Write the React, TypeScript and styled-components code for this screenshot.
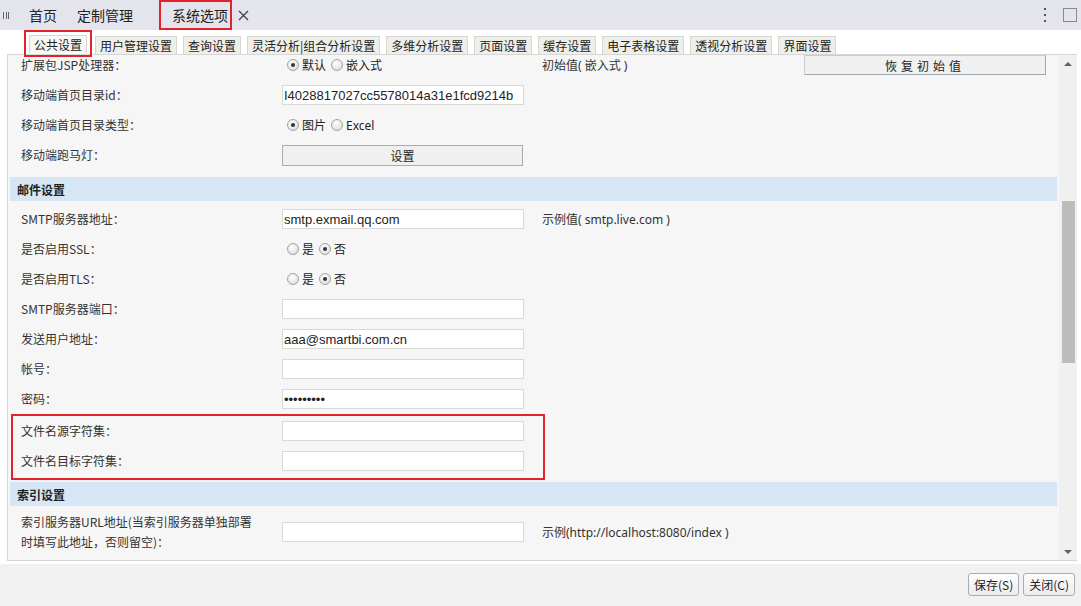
import React from 'react';
import styled, { createGlobalStyle } from 'styled-components';

const GlobalStyle = createGlobalStyle`
  html, body {
    margin: 0;
    padding: 0;
    background: #ffffff;
  }
  body {
    font-family: "Noto Sans CJK SC", "Noto Sans", sans-serif;
    color: #333;
  }
  * {
    box-sizing: border-box;
  }
`;

const Page = styled.div`
  width: 1081px;
  height: 606px;
  display: flex;
  flex-direction: column;
  overflow: hidden;
`;

// top navigation bar
const TopBar = styled.div`
  height: 30px;
  display: flex;
  align-items: stretch;
  background: #e4e4ec;
  padding: 0 4px 0 3px;
`;

const Grip = styled.div`
  width: 6px;
  margin-right: 10px;
  display: flex;
  align-items: center;
  justify-content: space-between;
  & > i {
    width: 1px;
    height: 7px;
    background: #666;
  }
`;

const NavTab = styled.div`
  display: flex;
  align-items: center;
  padding: 0 10px;
  font-size: 14px;
  color: #222;
`;

const ActiveTab = styled.div`
  display: flex;
  align-items: center;
  margin-left: 16px;
  font-size: 14px;
  color: #222;
`;

const Marked = styled.div`
  height: 30px;
  display: flex;
  align-items: center;
  padding: 0 2px 0 11px;
  border: 2px solid #e3232c;
`;

const CloseX = styled.span`
  margin-left: 6px;
  display: flex;
  align-items: center;
`;

const Spacer = styled.div`
  flex: 1;
`;

const Kebab = styled.div`
  width: 4px;
  display: flex;
  flex-direction: column;
  justify-content: center;
  gap: 4px;
  margin-right: 15px;
  & > i {
    width: 2px;
    height: 2px;
    background: #555;
  }
`;

const WinSquare = styled.div`
  align-self: center;
  width: 14px;
  height: 14px;
  border: 1px solid #8a8a8a;
`;

// content area
const Body = styled.div`
  flex: 1;
  display: flex;
  flex-direction: column;
  background: #fff;
  padding: 0 4px 3px 7px;
`;

const SubTabs = styled.div`
  height: 24px;
  display: flex;
  align-items: flex-end;
  gap: 6px;
  padding-left: 22px;
  position: relative;
  z-index: 1;
`;

const SubTab = styled.div<{ $active?: boolean }>`
  height: 18px;
  padding: 0 4px;
  display: flex;
  align-items: center;
  font-size: 12px;
  color: #222;
  background: ${(p) => (p.$active ? '#f7f7f4' : '#efefea')};
  border: 1px solid #d6d6d2;
  border-bottom: none;
`;

const SubTabMark = styled.div`
  height: 27px;
  margin: 0 -3px -3px -5px;
  padding: 0 3px 2px 3px;
  display: flex;
  align-items: flex-end;
  border: 2px solid #e3232c;
`;

const Panel = styled.div`
  height: 507px;
  display: flex;
  border: 1px solid #d6d6d6;
  border-right: none;
`;

const FormArea = styled.div`
  flex: 1;
  overflow: hidden;
  background: #f6f6f6;
`;

const FormInner = styled.div`
  margin-top: -5px;
`;

const Row = styled.div<{ $inset?: number; $h?: number }>`
  display: grid;
  grid-template-columns: 261px 242px 18px 262px 242px;
  align-items: center;
  height: ${(p) => p.$h ?? 30}px;
  padding-left: ${(p) => p.$inset ?? 13}px;
  font-size: 12px;
`;

const Label = styled.div`
  color: #333;
  line-height: 20px;
`;

const Field = styled.input`
  height: 20px;
  width: 242px;
  border: 1px solid #d9d9d6;
  background: #fff;
  padding: 0 1px;
  font-family: "Liberation Sans", "Noto Sans CJK SC", sans-serif;
  font-size: 13px;
  color: #222;
  outline: none;
`;

const Note = styled.div`
  font-size: 12px;
  color: #333;
  font-family: "Noto Sans", "Noto Sans CJK SC", sans-serif;
`;

const FlatButton = styled.div`
  height: 21px;
  width: 241px;
  display: flex;
  align-items: center;
  justify-content: center;
  background: #f0f0f0;
  border: 1px solid #a9adb2;
  font-size: 12px;
  color: #222;
`;

const ResetButton = styled(FlatButton)`
  height: 20px;
  width: 242px;
  letter-spacing: 4px;
  border-color: #c9cdd1 #9fa9b4 #9fa9b4 #c9cdd1;
`;

const RadioGroup = styled.div`
  display: flex;
  align-items: center;
  padding-left: 5px;
  font-size: 12px;
  color: #222;
`;

const RadioItem = styled.label`
  display: flex;
  align-items: center;
  gap: 3px;
  margin-right: 5px;
  font-family: "Noto Sans", "Noto Sans CJK SC", sans-serif;
`;

const RadioDot = styled.span<{ $on?: boolean }>`
  width: 12px;
  height: 12px;
  border-radius: 50%;
  border: 1px solid #a3a3a3;
  background: radial-gradient(circle at 40% 35%, #ffffff 0%, #e6e6e6 60%, #d2d2d2 100%);
  display: flex;
  align-items: center;
  justify-content: center;
  &::after {
    content: '';
    width: 4px;
    height: 4px;
    border-radius: 50%;
    background: ${(p) => (p.$on ? '#333' : 'transparent')};
  }
`;

const SectionHead = styled.div<{ $top?: number }>`
  height: 24px;
  margin: ${(p) => p.$top ?? 8}px 2px 3px 2px;
  padding-left: 7px;
  display: flex;
  align-items: center;
  background: #d6e6f5;
  font-size: 12px;
  font-weight: bold;
  color: #222;
`;

const Highlight = styled.div`
  width: 534px;
  margin-left: 3px;
  border: 2px solid #e3232c;
  padding-bottom: 2px;
`;

// scrollbar
const ScrollBar = styled.div`
  width: 18px;
  display: flex;
  flex-direction: column;
  align-items: center;
  background: #f0f0f0;
`;

const Arrow = styled.div<{ $down?: boolean }>`
  height: 17px;
  display: flex;
  align-items: center;
  justify-content: center;
  &::after {
    content: '';
    border-left: 4px solid transparent;
    border-right: 4px solid transparent;
    ${(p) => (p.$down ? 'border-top: 4px solid #606060;' : 'border-bottom: 4px solid #606060;')}
  }
`;

const Track = styled.div`
  flex: 1;
  width: 100%;
  display: flex;
  justify-content: center;
`;

const Thumb = styled.div<{ $offset: number; $size: number }>`
  width: 13px;
  margin-top: ${(p) => p.$offset}px;
  height: ${(p) => p.$size}px;
  background: #bcbcbc;
`;

const Footer = styled.div`
  height: 42px;
  display: flex;
  align-items: center;
  justify-content: flex-end;
  gap: 4px;
  padding: 0 6px 2px 0;
  background: #f1f1f1;
`;

const FootButton = styled.button`
  height: 23px;
  padding: 0 5px;
  font-family: "Noto Sans CJK SC", sans-serif;
  font-size: 12px;
  color: #222;
  border: 1px solid #a5adb7;
  border-radius: 3px;
  background: linear-gradient(#fdfdfd, #ececec);
`;

type Radio = { text: string; on?: boolean };

function Radios({ items }: { items: Radio[] }) {
  return (
    <RadioGroup>
      {items.map((r) => (
        <RadioItem key={r.text}>
          <RadioDot $on={r.on} />
          {r.text}
        </RadioItem>
      ))}
    </RadioGroup>
  );
}

const subTabs = [
  '用户管理设置',
  '查询设置',
  '灵活分析|组合分析设置',
  '多维分析设置',
  '页面设置',
  '缓存设置',
  '电子表格设置',
  '透视分析设置',
  '界面设置',
];

export default function App() {
  return (
    <Page>
      <GlobalStyle />
      <TopBar>
        <Grip>
          <i />
          <i />
          <i />
        </Grip>
        <NavTab>首页</NavTab>
        <NavTab>定制管理</NavTab>
        <ActiveTab>
          <Marked>系统选项</Marked>
          <CloseX>
            <svg width="11" height="11" viewBox="0 0 11 11">
              <path d="M1 1 L10 10 M10 1 L1 10" stroke="#444" strokeWidth="1.3" />
            </svg>
          </CloseX>
        </ActiveTab>
        <Spacer />
        <Kebab>
          <i />
          <i />
          <i />
        </Kebab>
        <WinSquare />
      </TopBar>

      <Body>
        <SubTabs>
          <SubTabMark>
            <SubTab $active>公共设置</SubTab>
          </SubTabMark>
          {subTabs.map((t) => (
            <SubTab key={t}>{t}</SubTab>
          ))}
        </SubTabs>

        <Panel>
          <FormArea>
            <FormInner>
              <Row>
                <Label>扩展包JSP处理器：</Label>
                <Radios items={[{ text: '默认', on: true }, { text: '嵌入式' }]} />
                <span />
                <Note>初始值( 嵌入式 )</Note>
                <ResetButton>恢复初始值</ResetButton>
              </Row>
              <Row>
                <Label>移动端首页目录id：</Label>
                <Field readOnly defaultValue="I4028817027cc5578014a31e1fcd9214b" />
              </Row>
              <Row>
                <Label>移动端首页目录类型：</Label>
                <Radios items={[{ text: '图片', on: true }, { text: 'Excel' }]} />
              </Row>
              <Row>
                <Label>移动端跑马灯：</Label>
                <FlatButton>设置</FlatButton>
              </Row>

              <SectionHead $top={7}>邮件设置</SectionHead>
              <Row>
                <Label>SMTP服务器地址：</Label>
                <Field readOnly defaultValue="smtp.exmail.qq.com" />
                <span />
                <Note>示例值( smtp.live.com )</Note>
              </Row>
              <Row>
                <Label>是否启用SSL：</Label>
                <Radios items={[{ text: '是' }, { text: '否', on: true }]} />
              </Row>
              <Row>
                <Label>是否启用TLS：</Label>
                <Radios items={[{ text: '是' }, { text: '否', on: true }]} />
              </Row>
              <Row>
                <Label>SMTP服务器端口：</Label>
                <Field readOnly defaultValue="" />
              </Row>
              <Row>
                <Label>发送用户地址：</Label>
                <Field readOnly defaultValue="aaa@smartbi.com.cn" />
              </Row>
              <Row>
                <Label>帐号：</Label>
                <Field readOnly defaultValue="" />
              </Row>
              <Row>
                <Label>密码：</Label>
                <Field readOnly type="password" defaultValue="123456789" />
              </Row>
              <Highlight>
                <Row $inset={8}>
                  <Label>文件名源字符集：</Label>
                  <Field readOnly defaultValue="" />
                </Row>
                <Row $inset={8}>
                  <Label>文件名目标字符集：</Label>
                  <Field readOnly defaultValue="" />
                </Row>
              </Highlight>

              <SectionHead $top={2}>索引设置</SectionHead>
              <Row $h={46}>
                <Label>
                  索引服务器URL地址(当索引服务器单独部署
                  <br />
                  时填写此地址，否则留空)：
                </Label>
                <Field readOnly defaultValue="" />
                <span />
                <Note>示例(http://localhost:8080/index )</Note>
              </Row>
              <Row>
                <span />
                <Field readOnly defaultValue="" />
              </Row>
            </FormInner>
          </FormArea>
          <ScrollBar>
            <Arrow />
            <Track>
              <Thumb $offset={129} $size={162} />
            </Track>
            <Arrow $down />
          </ScrollBar>
        </Panel>
      </Body>

      <Footer>
        <FootButton>保存(S)</FootButton>
        <FootButton>关闭(C)</FootButton>
      </Footer>
    </Page>
  );
}
